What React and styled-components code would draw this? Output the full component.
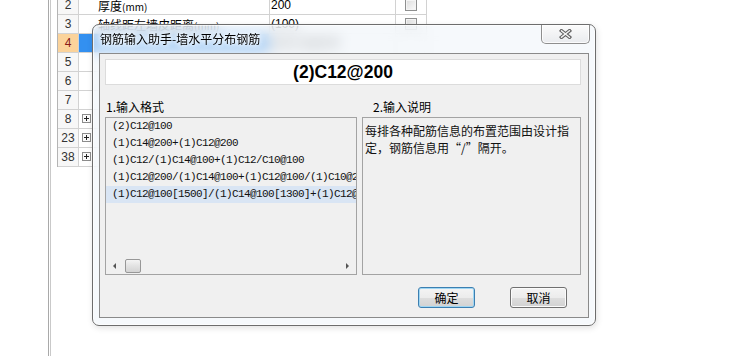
import React from "react";
import styled, { createGlobalStyle, css } from "styled-components";

const GlobalStyle = createGlobalStyle`
  html, body {
    margin: 0;
    padding: 0;
    background: #fff;
  }
  body {
    font-family: "Noto Sans CJK SC", "Liberation Sans", sans-serif;
    font-size: 12px;
    color: #000;
  }
`;

const sheetRows = [
  { no: "2", name: "厚度", unit: "(mm)", value: "200", check: true },
  { no: "3", name: "轴线距左墙皮距离", unit: "(mm)", value: "(100)", check: true },
  { no: "4", active: true, value: "(2)C12@200" },
  { no: "5" },
  { no: "6" },
  { no: "7" },
  { no: "8", plus: true },
  { no: "23", plus: true },
  { no: "38", plus: true },
];

const formats = [
  "(2)C12@100",
  "(1)C14@200+(1)C12@200",
  "(1)C12/(1)C14@100+(1)C12/C10@100",
  "(1)C12@200/(1)C14@100+(1)C12@100/(1)C10@200",
  "(1)C12@100[1500]/(1)C14@100[1300]+(1)C12@100[1500]",
];

const App = () => {
  return (
    <Page>
      <GlobalStyle />
      <Frame>
        <FrameInner>
          <Grid>
            {sheetRows.map((row) => (
              <React.Fragment key={row.no}>
                <NumCell $active={row.active}>{row.no}</NumCell>
                <NameCell $active={row.active}>
                  {row.plus && <PlusBox />}
                  {row.name && (
                    <span>
                      {row.name}
                      <Unit>{row.unit}</Unit>
                    </span>
                  )}
                </NameCell>
                <ValueCell>{row.value}</ValueCell>
                <CheckCell>{row.check && <CheckBox />}</CheckCell>
              </React.Fragment>
            ))}
          </Grid>
        </FrameInner>
      </Frame>

      <Dialog>
        <TitleBar>
          <Title>钢筋输入助手-墙水平分布钢筋</Title>
          <CloseButton>
            <svg width="13" height="10" viewBox="0 0 13 10">
              <path d="M2.5 1.8 L10.5 8.2 M10.5 1.8 L2.5 8.2" stroke="#5f5f5f" strokeWidth="3.6" strokeLinecap="square" />
              <path d="M2.5 1.8 L10.5 8.2 M10.5 1.8 L2.5 8.2" stroke="#f4f4f4" strokeWidth="1.4" strokeLinecap="square" />
            </svg>
          </CloseButton>
        </TitleBar>

        <Client>
          <ResultBox>(2)C12@200</ResultBox>
          <LabelRow>
            <Label>1.输入格式</Label>
            <Label $indent>2.输入说明</Label>
          </LabelRow>
          <PanelRow>
            <ListBox>
              <ListItems>
                {formats.map((f, i) => (
                  <ListItem key={f} $selected={i === formats.length - 1}>
                    {f}
                  </ListItem>
                ))}
              </ListItems>
              <HScroll>
                <ArrowArea>
                  <Arrow $dir="left" />
                </ArrowArea>
                <Thumb />
                <ArrowArea $right>
                  <Arrow $dir="right" />
                </ArrowArea>
              </HScroll>
            </ListBox>
            <NoteBox>每排各种配筋信息的布置范围由设计指定，钢筋信息用“/”隔开。</NoteBox>
          </PanelRow>
          <Footer>
            <Button $default>确定</Button>
            <Button>取消</Button>
          </Footer>
        </Client>
      </Dialog>
    </Page>
  );
};

const Page = styled.div`
  position: relative;
  width: 742px;
  height: 360px;
  overflow: hidden;
  background: #fff;
`;

const Frame = styled.div`
  margin-left: 48px;
  height: 360px;
  border-left: 1px solid #a9a9a9;
  padding-left: 1px;
`;

const FrameInner = styled.div`
  height: 100%;
  border-left: 1px solid #c9c9c9;
  padding-left: 6px;
`;

const Grid = styled.div`
  display: grid;
  grid-template-columns: 21px 191px 126px 31px;
  grid-auto-rows: 19px;
  width: max-content;
  margin-top: -4px;
  border-left: 1px solid #b4b4b4;
`;

const cell = css`
  box-sizing: border-box;
  display: flex;
  align-items: center;
  border-right: 1px solid #d2d2d2;
  border-bottom: 1px solid #d2d2d2;
  white-space: nowrap;
  overflow: hidden;
`;

const NumCell = styled.div`
  ${cell};
  justify-content: center;
  font-family: "Liberation Sans", sans-serif;
  font-size: 12px;
  background: ${({ $active }) => ($active ? "#fbd39b" : "#f7f7f7")};
  color: ${({ $active }) => ($active ? "#8a1a1a" : "#333")};
`;

const NameCell = styled.div`
  ${cell};
  padding-left: 19px;
  position: relative;
  background: ${({ $active }) => ($active ? "#3390f0" : "#fff")};
`;

const Unit = styled.span`
  font-size: 10px;
`;

const PlusBox = styled.span`
  position: absolute;
  left: 3px;
  top: 4px;
  width: 9px;
  height: 9px;
  box-sizing: border-box;
  border: 1px solid #8c8c8c;
  background: #fafafa;
  &::before,
  &::after {
    content: "";
    position: absolute;
    background: #222;
  }
  &::before {
    left: 1px;
    right: 1px;
    top: 3px;
    height: 1px;
  }
  &::after {
    top: 1px;
    bottom: 1px;
    left: 3px;
    width: 1px;
  }
`;

const ValueCell = styled.div`
  ${cell};
  padding-left: 1px;
  font-family: "Liberation Sans", sans-serif;
`;

const CheckCell = styled.div`
  ${cell};
  justify-content: center;
`;

const CheckBox = styled.span`
  width: 12px;
  height: 12px;
  box-sizing: border-box;
  border: 1px solid #8e8f8f;
  background: linear-gradient(135deg, #dcdcdc, #fbfbfb);
  box-shadow: inset 0 0 0 1px #f4f4f4;
`;

const Dialog = styled.div`
  position: absolute;
  left: 92px;
  top: 24px;
  width: 504px;
  height: 302px;
  box-sizing: border-box;
  display: flex;
  flex-direction: column;
  border: 1px solid #6d6d6d;
  border-radius: 7px;
  background: rgba(240, 245, 250, 0.62);
  backdrop-filter: blur(7px);
  box-shadow: inset 0 0 0 1px rgba(255, 255, 255, 0.7), 1px 2px 6px rgba(0, 0, 0, 0.12);
`;

const TitleBar = styled.div`
  display: flex;
  align-items: flex-start;
  height: 28px;
  padding-left: 7px;
`;

const Title = styled.div`
  line-height: 28px;
  font-size: 12px;
  color: #000;
  text-shadow: 0 0 6px #fff, 0 0 4px #fff, 0 0 10px #fff;
`;

const CloseButton = styled.div`
  margin-left: auto;
  margin-right: 5px;
  width: 49px;
  height: 19px;
  box-sizing: border-box;
  display: flex;
  align-items: center;
  justify-content: center;
  border: 1px solid #8e8e8e;
  border-top: none;
  border-radius: 0 0 5px 5px;
  background: linear-gradient(to bottom, #fbfbfb, #e9ebee);
  box-shadow: inset 0 0 0 1px rgba(255, 255, 255, 0.8);
`;

const Client = styled.div`
  flex: 1;
  margin: 0 6px 7px 6px;
  box-sizing: border-box;
  display: flex;
  flex-direction: column;
  border: 1px solid #8a8a8a;
  background: #f0f0f0;
  padding: 5px 6px 0 5px;
`;

const ResultBox = styled.div`
  height: 26px;
  box-sizing: border-box;
  display: flex;
  align-items: center;
  justify-content: center;
  background: #fff;
  border: 1px solid #dcdcdc;
  margin-right: 1px;
  font-family: "Liberation Sans", sans-serif;
  font-weight: bold;
  font-size: 17.5px;
`;

const LabelRow = styled.div`
  height: 32px;
  display: grid;
  grid-template-columns: 252px 1fr;
  column-gap: 5px;
  align-items: end;
  padding-bottom: 2px;
  box-sizing: border-box;
`;

const Label = styled.div`
  line-height: 17px;
  padding-left: ${({ $indent }) => ($indent ? "11px" : "1px")};
`;

const PanelRow = styled.div`
  height: 158px;
  display: grid;
  grid-template-columns: 252px 219px;
  column-gap: 5px;
`;

const ListBox = styled.div`
  box-sizing: border-box;
  display: flex;
  flex-direction: column;
  border: 1px solid #a3a3a3;
  background: #f0f0f0;
  overflow: hidden;
`;

const ListItems = styled.div`
  flex: 1;
  overflow: hidden;
`;

const ListItem = styled.div`
  height: 17px;
  line-height: 17px;
  padding-left: 6px;
  white-space: nowrap;
  font-family: "Liberation Mono", monospace;
  font-size: 11px;
  letter-spacing: -0.6px;
  color: #111;
  background: ${({ $selected }) => ($selected ? "#d9e5f4" : "transparent")};
`;

const HScroll = styled.div`
  height: 17px;
  display: flex;
  align-items: center;
  background: #f0f0f0;
`;

const ArrowArea = styled.div`
  width: 17px;
  height: 17px;
  display: flex;
  align-items: center;
  justify-content: center;
  margin-left: ${({ $right }) => ($right ? "auto" : "0")};
`;

const Arrow = styled.span`
  width: 0;
  height: 0;
  border-top: 3px solid transparent;
  border-bottom: 3px solid transparent;
  ${({ $dir }) =>
    $dir === "left"
      ? css`
          border-right: 3px solid #555;
        `
      : css`
          border-left: 3px solid #555;
        `}
`;

const Thumb = styled.div`
  width: 16px;
  height: 14px;
  margin-left: 2px;
  box-sizing: border-box;
  border: 1px solid #979797;
  border-radius: 2px;
  background: linear-gradient(to bottom, #f4f4f4, #e2e2e2 50%, #d3d3d3);
`;

const NoteBox = styled.div`
  box-sizing: border-box;
  border: 1px solid #a3a3a3;
  background: #f0f0f0;
  padding: 4px 3px 2px 2px;
  line-height: 17px;
  font-size: 12px;
  color: #111;
`;

const Footer = styled.div`
  display: flex;
  justify-content: flex-end;
  gap: 35px;
  padding: 12px 15px 0 0;
`;

const Button = styled.button`
  width: 57px;
  height: 21px;
  box-sizing: border-box;
  padding: 0;
  font-family: "Noto Sans CJK SC", sans-serif;
  font-size: 12px;
  color: #000;
  border-radius: 3px;
  border: 1px solid ${({ $default }) => ($default ? "#3c7fb1" : "#707070")};
  background: linear-gradient(to bottom, #f4f4f4 0%, #ececec 50%, #dedede 50%, #d2d2d2 100%);
  box-shadow: inset 0 0 0 1px ${({ $default }) => ($default ? "#9fd6f3" : "#fbfbfb")};
`;

export default App;
